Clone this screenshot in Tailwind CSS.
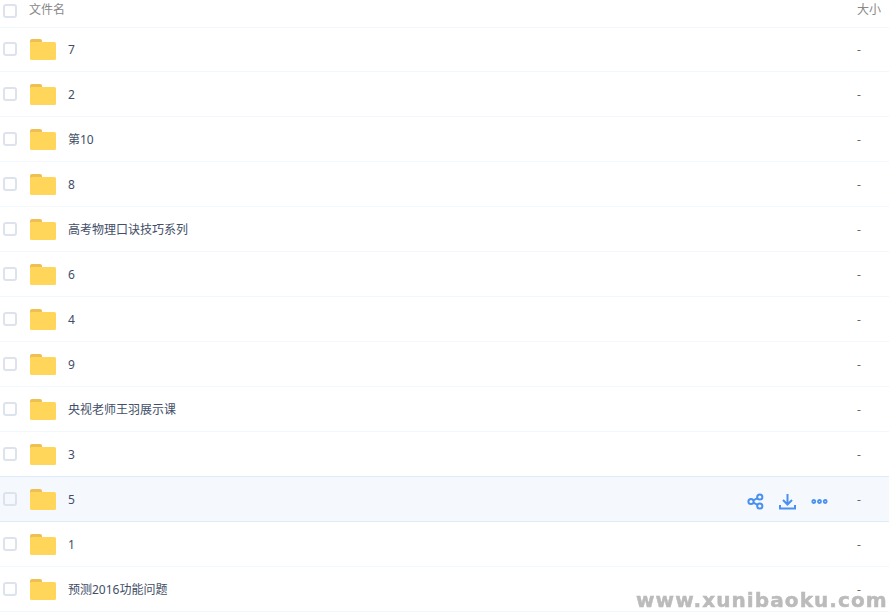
<!DOCTYPE html>
<html lang="zh-CN">
<head>
  <meta charset="UTF-8" />
  <title>文件列表</title>
  <script src="https://cdn.jsdelivr.net/npm/@tailwindcss/browser@4"></script>
</head>
<body class="bg-white overflow-hidden font-['Noto_Sans','Noto_Sans_CJK_SC',sans-serif] text-xs text-[#424e67]">

  <div class="relative w-[889px] h-[613px] overflow-hidden">

    <!-- table header -->
    <div class="flex items-center h-[28px] pb-[7px] border-b border-[#f2f6fd] text-[#888]">
      <span class="ml-[3px] mt-px w-[14px] h-[14px] rounded-[3px] border-2 border-[#dde3ec]"></span>
      <span class="ml-[12px] flex-1">文件名</span>
      <span class="w-[32px]">大小</span>
    </div>

    <!-- rows -->
    <div id="rows">
      <div class="flex items-center h-[44px] border-b border-[#f2f6fd]">
        <span class="ml-[3px] -mt-px w-[14px] h-[14px] rounded-[3px] border-2 border-[#dde3ec]"></span>
        <svg class="ml-[13px] mt-px" width="26" height="22" viewBox="0 0 26 22"><path d="M0 2a2 2 0 0 1 2-2h8a2 2 0 0 1 2 2v2H0z" fill="#eebf52"/><rect y="3" width="26" height="18" rx="1.5" fill="#ffd659"/></svg>
        <span class="ml-[12px] flex-1">7</span>
        <span class="w-[32px] text-[#666]">-</span>
      </div>
      <div class="flex items-center h-[45px] pt-px border-b border-[#f2f6fd]">
        <span class="ml-[3px] -mt-px w-[14px] h-[14px] rounded-[3px] border-2 border-[#dde3ec]"></span>
        <svg class="ml-[13px] mt-px" width="26" height="22" viewBox="0 0 26 22"><path d="M0 2a2 2 0 0 1 2-2h8a2 2 0 0 1 2 2v2H0z" fill="#eebf52"/><rect y="3" width="26" height="18" rx="1.5" fill="#ffd659"/></svg>
        <span class="ml-[12px] flex-1">2</span>
        <span class="w-[32px] text-[#666]">-</span>
      </div>
      <div class="flex items-center h-[45px] pt-px border-b border-[#f2f6fd]">
        <span class="ml-[3px] -mt-px w-[14px] h-[14px] rounded-[3px] border-2 border-[#dde3ec]"></span>
        <svg class="ml-[13px] mt-px" width="26" height="22" viewBox="0 0 26 22"><path d="M0 2a2 2 0 0 1 2-2h8a2 2 0 0 1 2 2v2H0z" fill="#eebf52"/><rect y="3" width="26" height="18" rx="1.5" fill="#ffd659"/></svg>
        <span class="ml-[12px] flex-1">第10</span>
        <span class="w-[32px] text-[#666]">-</span>
      </div>
      <div class="flex items-center h-[45px] pt-px border-b border-[#f2f6fd]">
        <span class="ml-[3px] -mt-px w-[14px] h-[14px] rounded-[3px] border-2 border-[#dde3ec]"></span>
        <svg class="ml-[13px] mt-px" width="26" height="22" viewBox="0 0 26 22"><path d="M0 2a2 2 0 0 1 2-2h8a2 2 0 0 1 2 2v2H0z" fill="#eebf52"/><rect y="3" width="26" height="18" rx="1.5" fill="#ffd659"/></svg>
        <span class="ml-[12px] flex-1">8</span>
        <span class="w-[32px] text-[#666]">-</span>
      </div>
      <div class="flex items-center h-[45px] pt-px border-b border-[#f2f6fd]">
        <span class="ml-[3px] -mt-px w-[14px] h-[14px] rounded-[3px] border-2 border-[#dde3ec]"></span>
        <svg class="ml-[13px] mt-px" width="26" height="22" viewBox="0 0 26 22"><path d="M0 2a2 2 0 0 1 2-2h8a2 2 0 0 1 2 2v2H0z" fill="#eebf52"/><rect y="3" width="26" height="18" rx="1.5" fill="#ffd659"/></svg>
        <span class="ml-[12px] flex-1">高考物理口诀技巧系列</span>
        <span class="w-[32px] text-[#666]">-</span>
      </div>
      <div class="flex items-center h-[45px] pt-px border-b border-[#f2f6fd]">
        <span class="ml-[3px] -mt-px w-[14px] h-[14px] rounded-[3px] border-2 border-[#dde3ec]"></span>
        <svg class="ml-[13px] mt-px" width="26" height="22" viewBox="0 0 26 22"><path d="M0 2a2 2 0 0 1 2-2h8a2 2 0 0 1 2 2v2H0z" fill="#eebf52"/><rect y="3" width="26" height="18" rx="1.5" fill="#ffd659"/></svg>
        <span class="ml-[12px] flex-1">6</span>
        <span class="w-[32px] text-[#666]">-</span>
      </div>
      <div class="flex items-center h-[45px] pt-px border-b border-[#f2f6fd]">
        <span class="ml-[3px] -mt-px w-[14px] h-[14px] rounded-[3px] border-2 border-[#dde3ec]"></span>
        <svg class="ml-[13px] mt-px" width="26" height="22" viewBox="0 0 26 22"><path d="M0 2a2 2 0 0 1 2-2h8a2 2 0 0 1 2 2v2H0z" fill="#eebf52"/><rect y="3" width="26" height="18" rx="1.5" fill="#ffd659"/></svg>
        <span class="ml-[12px] flex-1">4</span>
        <span class="w-[32px] text-[#666]">-</span>
      </div>
      <div class="flex items-center h-[45px] pt-px border-b border-[#f2f6fd]">
        <span class="ml-[3px] -mt-px w-[14px] h-[14px] rounded-[3px] border-2 border-[#dde3ec]"></span>
        <svg class="ml-[13px] mt-px" width="26" height="22" viewBox="0 0 26 22"><path d="M0 2a2 2 0 0 1 2-2h8a2 2 0 0 1 2 2v2H0z" fill="#eebf52"/><rect y="3" width="26" height="18" rx="1.5" fill="#ffd659"/></svg>
        <span class="ml-[12px] flex-1">9</span>
        <span class="w-[32px] text-[#666]">-</span>
      </div>
      <div class="flex items-center h-[45px] pt-px border-b border-[#f2f6fd]">
        <span class="ml-[3px] -mt-px w-[14px] h-[14px] rounded-[3px] border-2 border-[#dde3ec]"></span>
        <svg class="ml-[13px] mt-px" width="26" height="22" viewBox="0 0 26 22"><path d="M0 2a2 2 0 0 1 2-2h8a2 2 0 0 1 2 2v2H0z" fill="#eebf52"/><rect y="3" width="26" height="18" rx="1.5" fill="#ffd659"/></svg>
        <span class="ml-[12px] flex-1">央视老师王羽展示课</span>
        <span class="w-[32px] text-[#666]">-</span>
      </div>
      <div class="flex items-center h-[45px] pt-px border-b border-[#dcebfb]">
        <span class="ml-[3px] -mt-px w-[14px] h-[14px] rounded-[3px] border-2 border-[#dde3ec]"></span>
        <svg class="ml-[13px] mt-px" width="26" height="22" viewBox="0 0 26 22"><path d="M0 2a2 2 0 0 1 2-2h8a2 2 0 0 1 2 2v2H0z" fill="#eebf52"/><rect y="3" width="26" height="18" rx="1.5" fill="#ffd659"/></svg>
        <span class="ml-[12px] flex-1">3</span>
        <span class="w-[32px] text-[#666]">-</span>
      </div>

      <!-- hovered row -->
      <div class="flex items-center h-[45px] pt-px border-b border-[#dcebfb] bg-[#f5f9fe]">
        <span class="ml-[3px] -mt-px w-[14px] h-[14px] rounded-[3px] border-2 border-[#dde3ec]"></span>
        <svg class="ml-[13px] mt-px" width="26" height="22" viewBox="0 0 26 22"><path d="M0 2a2 2 0 0 1 2-2h8a2 2 0 0 1 2 2v2H0z" fill="#eebf52"/><rect y="3" width="26" height="18" rx="1.5" fill="#ffd659"/></svg>
        <span class="ml-[12px] flex-1">5</span>
        <div class="flex items-center gap-[15px] mr-[29px] mt-[4px] text-[#4a90f0]">
          <svg width="17" height="17" viewBox="0 0 17 17" fill="none" stroke="currentColor" stroke-width="2"><circle cx="4" cy="8.5" r="2.6"/><circle cx="12.8" cy="4" r="2.6"/><circle cx="12.8" cy="13" r="2.6"/><path d="M6.3 7.3l4.2-2.1M6.3 9.7l4.2 2.1"/></svg>
          <svg width="17" height="17" viewBox="0 0 17 17" fill="none" stroke="currentColor" stroke-width="2"><path d="M8.5 1v10M4 7l4.5 4.5L13 7"/><path d="M1 12v3.5h15V12" stroke-width="2"/></svg>
          <svg width="17" height="17" viewBox="0 0 17 17" fill="none" stroke="currentColor" stroke-width="1.8"><circle cx="2.8" cy="8.5" r="1.5"/><circle cx="8.5" cy="8.5" r="1.5"/><circle cx="14.2" cy="8.5" r="1.5"/></svg>
        </div>
        <span class="w-[32px] text-[#666]">-</span>
      </div>

      <div class="flex items-center h-[45px] pt-px border-b border-[#f2f6fd]">
        <span class="ml-[3px] -mt-px w-[14px] h-[14px] rounded-[3px] border-2 border-[#dde3ec]"></span>
        <svg class="ml-[13px] mt-px" width="26" height="22" viewBox="0 0 26 22"><path d="M0 2a2 2 0 0 1 2-2h8a2 2 0 0 1 2 2v2H0z" fill="#eebf52"/><rect y="3" width="26" height="18" rx="1.5" fill="#ffd659"/></svg>
        <span class="ml-[12px] flex-1">1</span>
        <span class="w-[32px] text-[#666]">-</span>
      </div>
      <div class="flex items-center h-[45px] pt-px border-b border-[#f2f6fd]">
        <span class="ml-[3px] -mt-px w-[14px] h-[14px] rounded-[3px] border-2 border-[#dde3ec]"></span>
        <svg class="ml-[13px] mt-px" width="26" height="22" viewBox="0 0 26 22"><path d="M0 2a2 2 0 0 1 2-2h8a2 2 0 0 1 2 2v2H0z" fill="#eebf52"/><rect y="3" width="26" height="18" rx="1.5" fill="#ffd659"/></svg>
        <span class="ml-[12px] flex-1">预测2016功能问题</span>
        <span class="w-[32px] text-[#666]">-</span>
      </div>
    </div>

    <!-- watermark over the corner -->
    <div class="absolute left-[636px] top-[588px] font-['DejaVu_Sans',sans-serif] font-bold text-[20px] leading-[24px] tracking-[1.1px] text-[#bbb] [-webkit-text-stroke:0.5px_#bbb] blur-[0.4px] whitespace-nowrap">www.xunibaoku.com</div>
  </div>

</body>
</html>
